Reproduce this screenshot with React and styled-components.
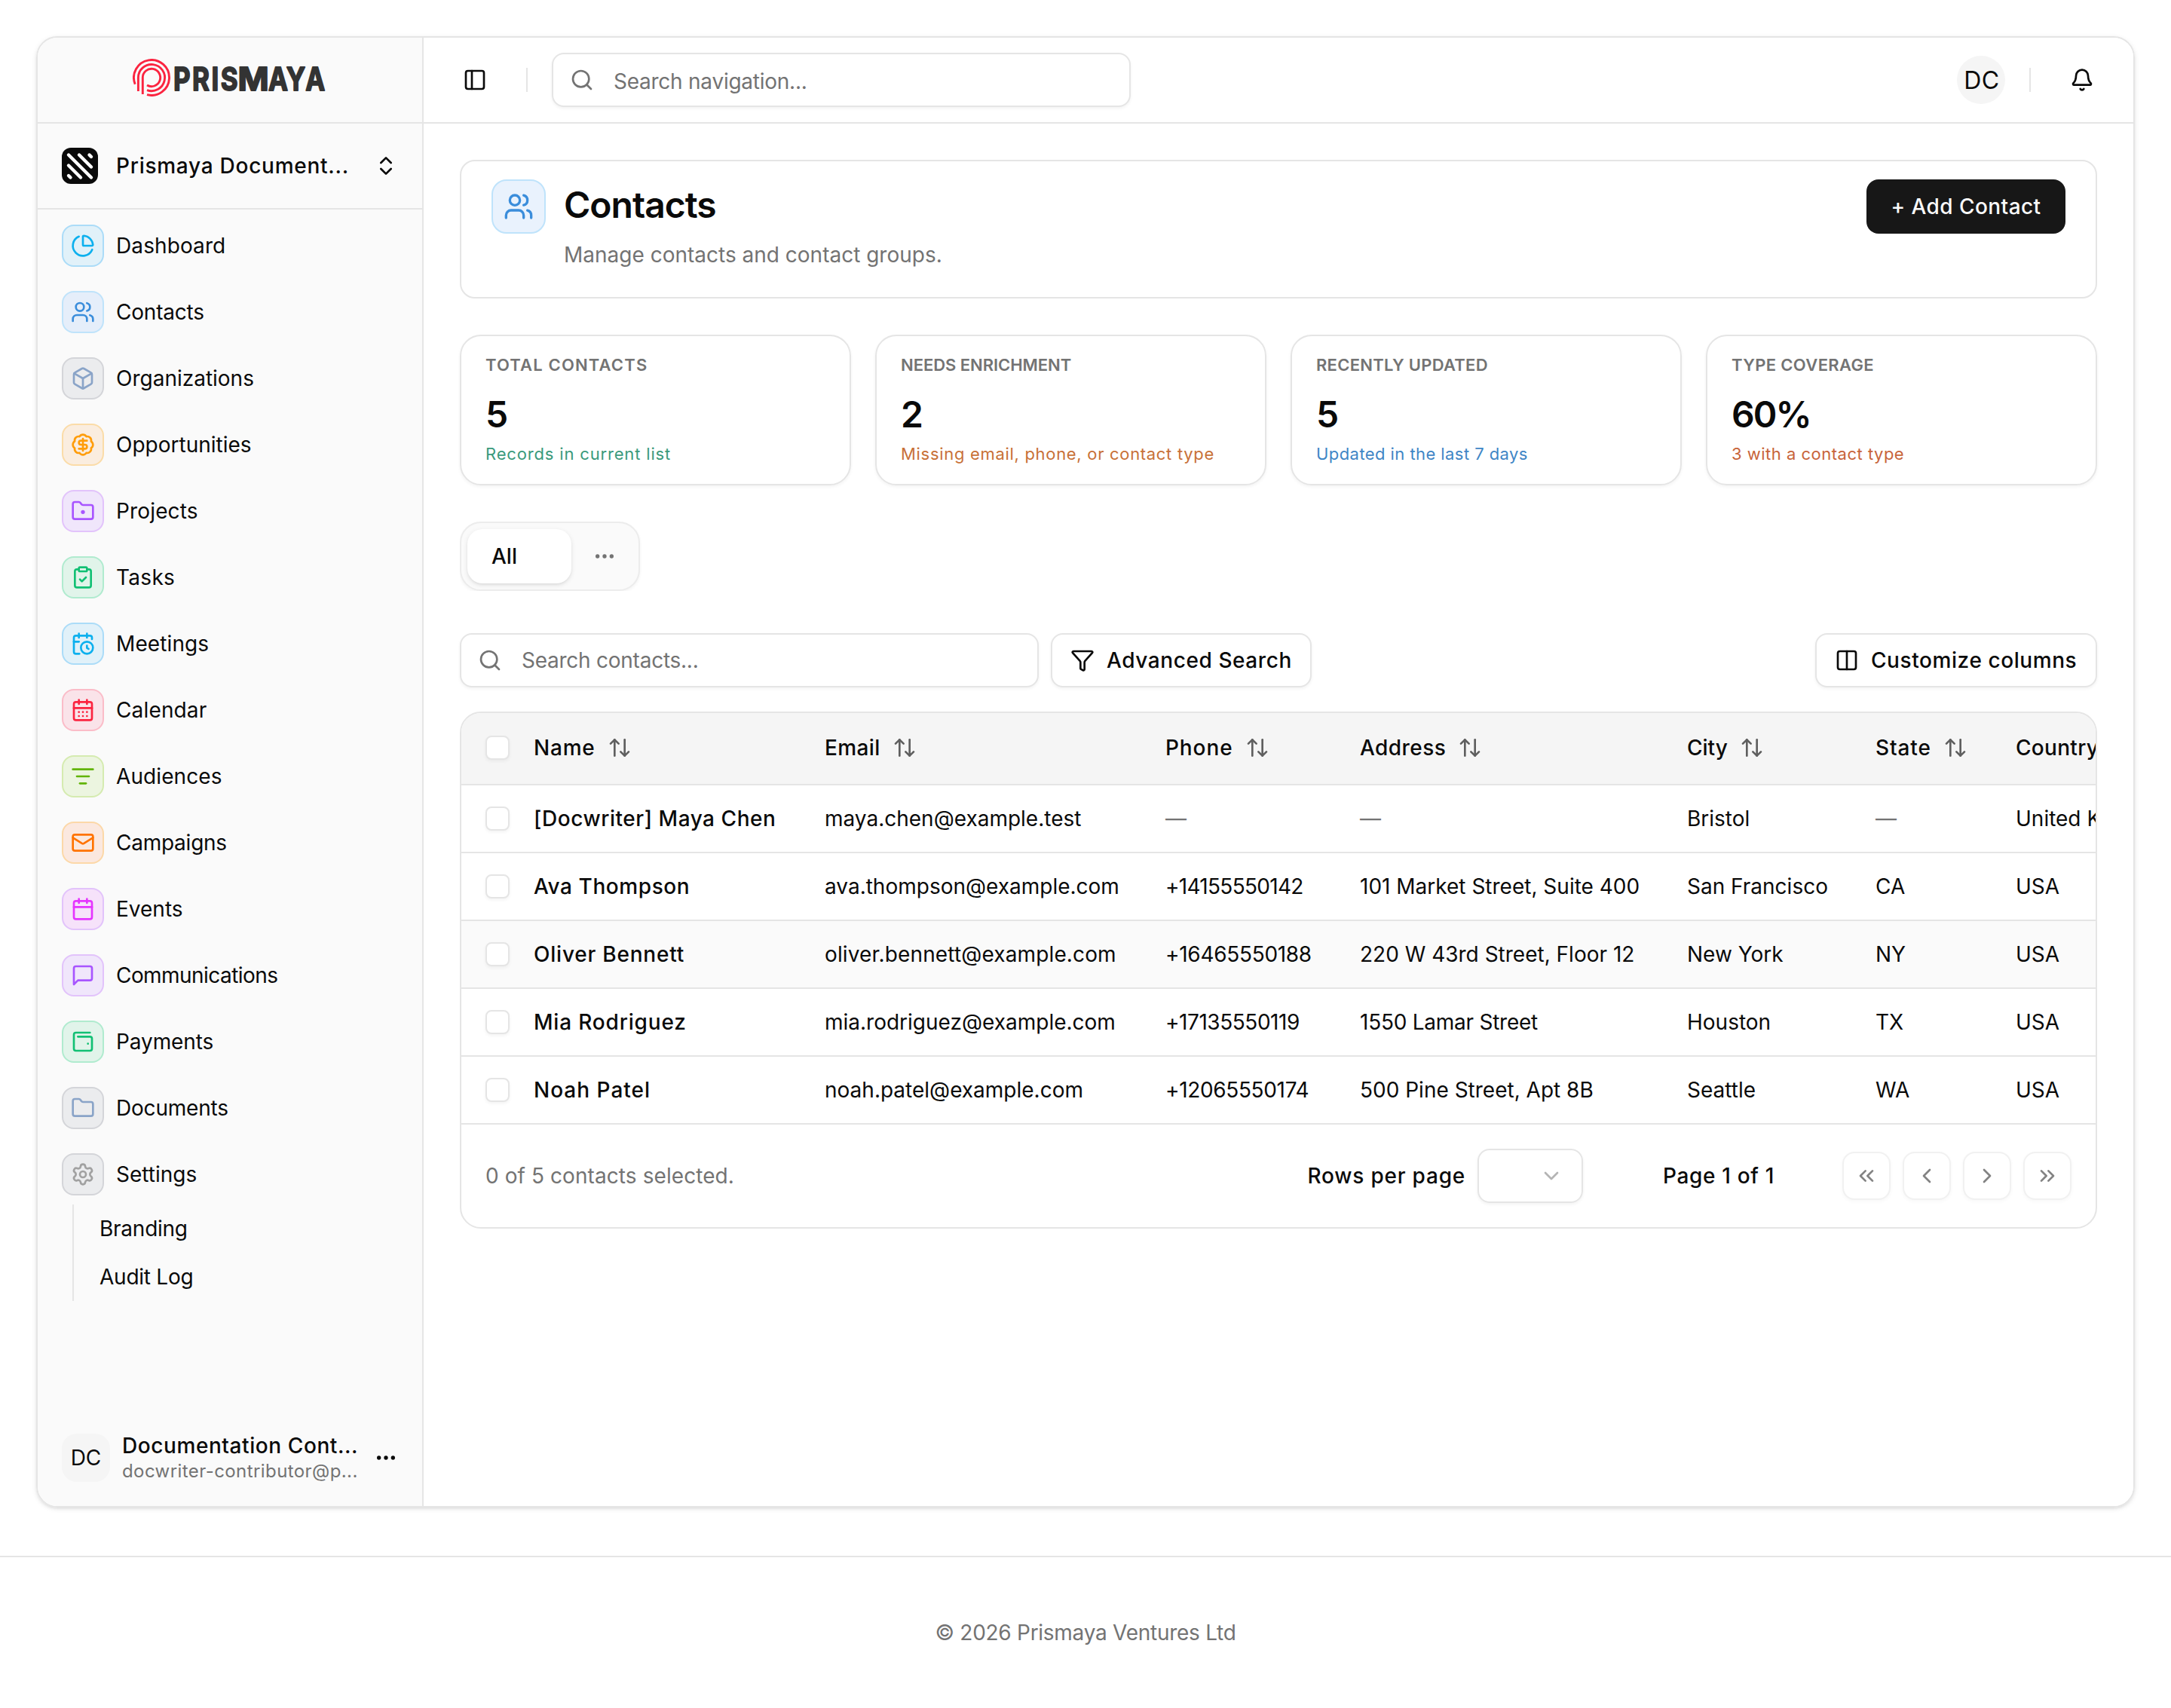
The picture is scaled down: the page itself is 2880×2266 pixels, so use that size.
import React from "react";
import styled, { createGlobalStyle } from "styled-components";
import {
  ArrowUpDown, BadgeDollarSign, Bell, Box, Calendar, CalendarClock, CalendarDays, ChartPie,
  ChevronDown, ChevronLeft, ChevronRight, ChevronsLeft, ChevronsRight, ChevronsUpDown,
  ClipboardCheck, Columns2, Ellipsis, Folder, FolderDot, Funnel, ListFilter, Mail, PanelLeft,
  Search, Settings, Users, WalletMinimal,
} from "lucide-react";

const INK = "#0a0a0a";
const MUTED = "#737373";
const LINE = "#e5e5e5";

const GlobalStyle = createGlobalStyle`
  *, *::before, *::after { box-sizing: border-box; }
  body {
    margin: 0;
    background: #fff;
    color: ${INK};
    font-family: Inter, "Liberation Sans", sans-serif;
    font-size: 28px;
    line-height: 40px;
  }
  svg { display: block; flex: none; }
  button { font: inherit; color: inherit; }
`;

const Page = styled.div`
  display: flex;
  flex-direction: column;
  width: 2880px;
  height: 2266px;
  overflow: hidden;
`;

const Shell = styled.div`
  display: flex;
  height: 1952px;
  margin: 48px 48px 64px;
  border: 2px solid ${LINE};
  border-radius: 28px;
  overflow: hidden;
  flex: none;
  box-shadow: 0 2px 6px rgba(0, 0, 0, 0.1), 0 2px 4px -2px rgba(0, 0, 0, 0.1);
`;

const Sidebar = styled.aside`
  display: flex;
  flex-direction: column;
  width: 512px;
  flex: none;
  background: #fafafa;
  border-right: 2px solid ${LINE};
`;

const Brand = styled.div`
  display: flex;
  align-items: center;
  height: 114px;
  padding: 0 0 6px 126px;
  border-bottom: 2px solid ${LINE};
`;

const Workspace = styled.div`
  display: flex;
  align-items: center;
  height: 114px;
  padding: 0 32px;
  border-bottom: 2px solid ${LINE};
`;

const WorkspaceMark = styled.div`
  width: 48px;
  height: 48px;
  border-radius: 12px;
  background: ${INK};
`;

const WorkspaceName = styled.span`
  flex: 1;
  margin-left: 24px;
  font-weight: 500;
  letter-spacing: 0.74px;
  white-space: nowrap;
`;

const Nav = styled.nav`
  display: flex;
  flex-direction: column;
  padding: 4px 32px 0;
`;

const NavItem = styled.a`
  display: flex;
  align-items: center;
  gap: 16px;
  height: 88px;
  letter-spacing: ${(p) => p.$track || 0}px;
`;

const IconTile = styled.span`
  display: flex;
  align-items: center;
  justify-content: center;
  flex: none;
  width: ${(p) => p.$size || 56}px;
  height: ${(p) => p.$size || 56}px;
  border: 2px solid ${(p) => p.$line};
  border-radius: ${(p) => (p.$size ? 20 : 16)}px;
  background: ${(p) => p.$fill};
  color: ${(p) => p.$ink};
`;

const SubNav = styled.div`
  display: flex;
  flex-direction: column;
  gap: 8px;
  margin: -4px 0 0 14px;
  padding: 4px 0 4px 34px;
  border-left: 2px solid ${LINE};
`;

const SubItem = styled.a`
  display: flex;
  align-items: center;
  height: 56px;
  letter-spacing: -0.25px;
`;

const Account = styled.div`
  display: flex;
  align-items: center;
  height: 98px;
  margin-top: auto;
  padding: 0 32px 30px;
`;

const AccountAvatar = styled.div`
  display: flex;
  align-items: center;
  justify-content: center;
  width: 64px;
  height: 64px;
  border-radius: 20px;
  background: #f5f5f5;
`;

const AccountText = styled.div`
  flex: 1;
  margin-left: 16px;
  white-space: nowrap;
`;

const AccountName = styled.div`
  font-weight: 500;
  line-height: 35px;
  letter-spacing: 0.58px;
`;

const AccountMail = styled.div`
  color: ${MUTED};
  font-size: 24px;
  line-height: 32px;
  letter-spacing: 0.42px;
`;

const Main = styled.main`
  display: flex;
  flex-direction: column;
  flex: 1;
  min-width: 0;
  background: #fff;
`;

const TopBar = styled.header`
  display: flex;
  align-items: center;
  height: 114px;
  padding: 0 52px;
  border-bottom: 2px solid ${LINE};
`;

const Rule = styled.span`
  width: 2px;
  height: 32px;
  background: ${LINE};
  margin: 0 ${(p) => p.$after}px 0 ${(p) => p.$before}px;
`;

const SearchBox = styled.div`
  display: flex;
  align-items: center;
  gap: 26px;
  width: 768px;
  height: 72px;
  padding: 0 22px;
  border: 2px solid ${LINE};
  border-radius: 16px;
  background: #fff;
  color: ${MUTED};
  box-shadow: 0 2px 4px rgba(0, 0, 0, 0.05);
`;

const Placeholder = styled.span`
  padding-top: ${(p) => p.$drop || 0}px;
  letter-spacing: -0.25px;
`;

const Avatar = styled.div`
  display: flex;
  align-items: center;
  justify-content: center;
  width: 64px;
  height: 64px;
  margin-left: auto;
  padding: 2px 0 0 2px;
  border-radius: 50%;
  background: #f5f5f5;
  font-size: 32px;
  letter-spacing: 0.6px;
`;

const Content = styled.div`
  display: flex;
  flex-direction: column;
  padding: 48px;
`;

const PageHeader = styled.section`
  display: flex;
  align-items: flex-start;
  height: 184px;
  padding: 24px 40px;
  border: 2px solid ${LINE};
  border-radius: 20px;
`;

const PageHeading = styled.div`
  flex: 1;
  margin-left: 24px;
`;

const Title = styled.h1`
  margin: 0;
  font-size: 48px;
  font-weight: 600;
  line-height: 68px;
  letter-spacing: -1px;
`;

const Description = styled.p`
  margin: 12px 0 0;
  color: ${MUTED};
`;

const PrimaryButton = styled.button`
  width: 264px;
  height: 72px;
  padding: 0;
  border: 0;
  border-radius: 16px;
  background: #171717;
  color: #fafafa;
  font-weight: 500;
  letter-spacing: 0.44px;
`;

const Stats = styled.section`
  display: grid;
  grid-template-columns: repeat(4, 1fr);
  gap: 32px;
  margin-top: 48px;
`;

const StatCard = styled.div`
  height: 200px;
  padding: 24px 32px;
  border: 2px solid ${LINE};
  border-radius: 28px;
  box-shadow: 0 2px 4px rgba(0, 0, 0, 0.05);
  white-space: nowrap;
`;

const StatLabel = styled.div`
  color: ${MUTED};
  font-size: 22px;
  font-weight: 600;
  line-height: 28px;
  letter-spacing: ${(p) => p.$track}px;
`;

const StatValue = styled.div`
  margin-top: 16px;
  font-size: 48px;
  font-weight: 600;
  line-height: 72px;
  letter-spacing: -0.04em;
`;

const StatNote = styled.div`
  color: ${(p) => p.$ink};
  font-size: 22px;
  line-height: 32px;
  letter-spacing: ${(p) => p.$track}px;
`;

const TabStrip = styled.div`
  height: 92px;
  margin-top: 48px;
  overflow: hidden;
`;

const Tabs = styled.div`
  display: flex;
  align-items: center;
  gap: 8px;
  width: 239px;
  height: 92px;
  padding: 0 8px;
  border: 2px solid #ececec;
  border-radius: 28px;
  background: #fafafa;
  box-shadow: 0 2px 4px rgba(0, 0, 0, 0.05);
`;

const Tab = styled.div`
  display: flex;
  align-items: center;
  width: 138px;
  height: 72px;
  padding-left: 32px;
  border-radius: 20px;
  background: #fff;
  font-weight: 500;
  box-shadow: 0 2px 6px rgba(0, 0, 0, 0.1), 0 2px 4px -2px rgba(0, 0, 0, 0.1);
`;

const TabMore = styled.div`
  display: flex;
  justify-content: center;
  width: 72px;
  color: ${MUTED};
`;

const Toolbar = styled.div`
  display: flex;
  gap: 16px;
  margin-top: 56px;
`;

const OutlineButton = styled.button`
  display: flex;
  align-items: center;
  gap: 16px;
  width: ${(p) => p.$width}px;
  height: 72px;
  margin-left: ${(p) => (p.$end ? "auto" : 0)};
  padding: 0 0 0 24px;
  border: 2px solid ${LINE};
  border-radius: 16px;
  background: #fff;
  font-weight: 500;
  letter-spacing: 0.58px;
  white-space: nowrap;
  box-shadow: 0 2px 4px rgba(0, 0, 0, 0.05);
`;

const TableCard = styled.section`
  margin-top: 32px;
  border: 2px solid ${LINE};
  border-radius: 28px;
  overflow: hidden;
`;

const Table = styled.table`
  width: 2322px;
  table-layout: fixed;
  border-collapse: separate;
  border-spacing: 0;
  white-space: nowrap;
`;

const HeadCell = styled.th`
  height: 96px;
  padding: 0 0 0 ${(p) => p.$pad || 0}px;
  border-bottom: 2px solid ${LINE};
  background: #f5f5f5;
  font-weight: 500;
  text-align: left;
`;

const HeadLabel = styled.span`
  display: flex;
  align-items: center;
  gap: 16px;
  height: 40px;
  margin-top: -2px;
  letter-spacing: ${(p) => p.$track}px;
`;

const SortIcon = styled(ArrowUpDown)`
  color: #5f5f5f;
`;

const Cell = styled.td`
  height: 90px;
  padding: 0 0 0 ${(p) => p.$pad || 0}px;
  border-bottom: 2px solid ${LINE};
  background: ${(p) => (p.$active ? "#fafafa" : "#fff")};
  color: ${(p) => (p.$empty ? MUTED : INK)};
  font-weight: ${(p) => (p.$strong ? 500 : 400)};
  letter-spacing: ${(p) => p.$track || 0}px;
`;

const Checkbox = styled.span`
  display: block;
  width: 32px;
  height: 32px;
  margin-top: ${(p) => p.$lift || 0}px;
  border: 2px solid ${LINE};
  border-radius: 8px;
  background: #fff;
  box-shadow: 0 2px 4px rgba(0, 0, 0, 0.05);
`;

const TableFooter = styled.div`
  display: flex;
  align-items: center;
  height: 136px;
  padding: 0 32px;
`;

const Selected = styled.span`
  flex: 1;
  color: ${MUTED};
  letter-spacing: 0.08px;
`;

const Strong = styled.span`
  font-weight: 500;
  letter-spacing: 0.78px;
`;

const PageSize = styled.div`
  display: flex;
  align-items: center;
  justify-content: flex-end;
  width: 140px;
  height: 72px;
  margin-left: 16px;
  padding-right: 24px;
  border: 2px solid ${LINE};
  border-radius: 16px;
  color: #b4b4b4;
  box-shadow: 0 2px 4px rgba(0, 0, 0, 0.05);
`;

const PageCount = styled.div`
  width: 200px;
  margin: 0 64px 0 80px;
  font-weight: 500;
  letter-spacing: 0.66px;
  text-align: center;
`;

const Pager = styled.div`
  display: flex;
  gap: 16px;
`;

const PagerButton = styled.button`
  display: flex;
  align-items: center;
  justify-content: center;
  width: 64px;
  height: 64px;
  padding: 0;
  border: 2px solid ${LINE};
  border-radius: 16px;
  background: #fff;
  box-shadow: 0 2px 4px rgba(0, 0, 0, 0.05);
  opacity: 0.5;
`;

const Footer = styled.footer`
  display: flex;
  align-items: center;
  justify-content: center;
  height: 202px;
  border-top: 2px solid ${LINE};
  color: ${MUTED};
  letter-spacing: -0.27px;
`;

function MessageIcon({ size }) {
  return (
    <svg width={size} height={size} viewBox="0 0 24 24" fill="none" stroke="currentColor" strokeWidth="2" strokeLinecap="round" strokeLinejoin="round">
      <path d="M21 15a2 2 0 0 1-2 2H7l-4 4V5a2 2 0 0 1 2-2h14a2 2 0 0 1 2 2z" />
    </svg>
  );
}

const tones = {
  sky: { $ink: "#0db0ee", $fill: "#e1f1f9", $line: "#abdcf8" },
  blue: { $ink: "#3a8ddb", $fill: "#e5eefa", $line: "#bfe3fb" },
  blueOnWhite: { $ink: "#3a8ddb", $fill: "#e9f2fd", $line: "#bfe3fb" },
  slate: { $ink: "#8aa4c8", $fill: "#ebecee", $line: "#d4d5d9" },
  gray: { $ink: "#a1a1a1", $fill: "#ebecee", $line: "#d4d5d9" },
  amber: { $ink: "#ff9d0a", $fill: "#faeddf", $line: "#fbdca8" },
  violet: { $ink: "#a855ff", $fill: "#f0e6fb", $line: "#e2c3fb" },
  green: { $ink: "#12c074", $fill: "#e1f4ea", $line: "#b0ebcf" },
  red: { $ink: "#fb2440", $fill: "#fae3e9", $line: "#fbbcc8" },
  lime: { $ink: "#62b404", $fill: "#ecf5e0", $line: "#d5ebb0" },
  orange: { $ink: "#ff7300", $fill: "#fbe8df", $line: "#fcd8a8" },
  pink: { $ink: "#e535ff", $fill: "#f6e2fa", $line: "#e2c3fb" },
};

const navItems = [
  ["Dashboard", ChartPie, "sky", 0.1],
  ["Contacts", Users, "blue", -0.2],
  ["Organizations", Box, "slate"],
  ["Opportunities", BadgeDollarSign, "amber"],
  ["Projects", FolderDot, "violet", 0.15],
  ["Tasks", ClipboardCheck, "green", 0.3],
  ["Meetings", CalendarClock, "sky", 0.1],
  ["Calendar", CalendarDays, "red", 0.15],
  ["Audiences", ListFilter, "lime", 0.1],
  ["Campaigns", Mail, "orange", -0.25],
  ["Events", Calendar, "pink"],
  ["Communications", MessageIcon, "violet", -0.56],
  ["Payments", WalletMinimal, "green", -0.1],
  ["Documents", Folder, "slate", -0.2],
  ["Settings", Settings, "gray"],
];

const stats = [
  { label: "TOTAL CONTACTS", labelTrack: 1.15, value: "5", note: "Records in current list", noteTrack: 0.83, ink: "#3a9a7c" },
  { label: "NEEDS ENRICHMENT", labelTrack: -0.05, value: "2", note: "Missing email, phone, or contact type", noteTrack: 0.69, ink: "#c87137" },
  { label: "RECENTLY UPDATED", labelTrack: 0.25, value: "5", note: "Updated in the last 7 days", noteTrack: 0.43, ink: "#3f86c6" },
  { label: "TYPE COVERAGE", labelTrack: 0.35, value: "60%", note: "3 with a contact type", noteTrack: 0.5, ink: "#c8643a" },
];

const columnWidths = [96, 386, 452, 258, 434, 250, 186, 260];
const columns = [
  ["Name", 0.8], ["Email", 0.4], ["Phone", 0.9], ["Address", 0.45], ["City", 0], ["State", 0.9], ["Country", 0.3],
];

const nameTracks = [0.54, 0.58, 0.78, 0.82, 1];
const phoneTracks = [0, -0.7, -0.3, -0.45, -0.35];

const contacts = [
  ["[Docwriter] Maya Chen", "maya.chen@example.test", "—", "—", "Bristol", "—", "United Kingdom"],
  ["Ava Thompson", "ava.thompson@example.com", "+14155550142", "101 Market Street, Suite 400", "San Francisco", "CA", "USA"],
  ["Oliver Bennett", "oliver.bennett@example.com", "+16465550188", "220 W 43rd Street, Floor 12", "New York", "NY", "USA"],
  ["Mia Rodriguez", "mia.rodriguez@example.com", "+17135550119", "1550 Lamar Street", "Houston", "TX", "USA"],
  ["Noah Patel", "noah.patel@example.com", "+12065550174", "500 Pine Street, Apt 8B", "Seattle", "WA", "USA"],
];

function cellTrack(row, column) {
  if (column === 0) return nameTracks[row];
  if (column === 1 && row === 2) return 0.14;
  if (column === 2) return phoneTracks[row];
  if (column === 3 && row === 3) return -0.25;
  return 0;
}

function Logo() {
  return (
    <svg width="264" height="50" viewBox="0 0 264 50" role="img" aria-label="Prismaya">
      <g fill="none" stroke="#fb2440" strokeWidth="2.9">
        <path d="M3.2 33.7A23.5 23.5 0 1 1 19 47.7" />
        <path d="M7.4 43V25A17.6 17.6 0 1 1 19 41.6" />
        <path d="M13.3 47V25A11.7 11.7 0 1 1 19 35" />
      </g>
      <g fill="#333" stroke="#333" strokeWidth="1.8" strokeLinejoin="round" fontFamily="Inter, sans-serif" fontWeight="700" fontSize="42.5">
        <text transform="scale(0.82 1)" x="66 96.5 127.4 142.5" y="41.5">PRIS</text>
        <text transform="translate(139.5 41.5) scale(1.04 1)">M</text>
        <text transform="scale(0.82 1)" x="219.5 248.5 279.5" y="41.5">AYA</text>
      </g>
    </svg>
  );
}

function StripesIcon() {
  return (
    <svg width="48" height="48" viewBox="0 0 48 48" fill="none" stroke="#fff" strokeWidth="4.4" strokeLinecap="round">
      <path d="M9 9.5 39 39.5M23 9.5 39 25.5M36.5 9.5 39 12M9 23.5 25 39.5M9 37 11.5 39.5" />
    </svg>
  );
}

function SideNavigation() {
  return (
    <Sidebar>
      <Brand><Logo /></Brand>
      <Workspace>
        <WorkspaceMark><StripesIcon /></WorkspaceMark>
        <WorkspaceName>Prismaya Document...</WorkspaceName>
        <ChevronsUpDown size={32} />
      </Workspace>
      <Nav>
        {navItems.map(([label, Icon, tone, track]) => (
          <NavItem key={label} $track={track}>
            <IconTile {...tones[tone]}><Icon size={32} /></IconTile>
            {label}
          </NavItem>
        ))}
        <SubNav>
          <SubItem>Branding</SubItem>
          <SubItem>Audit Log</SubItem>
        </SubNav>
      </Nav>
      <Account>
        <AccountAvatar>DC</AccountAvatar>
        <AccountText>
          <AccountName>Documentation Cont...</AccountName>
          <AccountMail>docwriter-contributor@p...</AccountMail>
        </AccountText>
        <Ellipsis size={32} />
      </Account>
    </Sidebar>
  );
}

function ContactsTable() {
  return (
    <TableCard>
      <Table>
        <colgroup>
          {columnWidths.map((width, i) => <col key={i} width={width} />)}
        </colgroup>
        <thead>
          <tr>
            <HeadCell $pad={32}><Checkbox $lift={-2} /></HeadCell>
            {columns.map(([label, track]) => (
              <HeadCell key={label}>
                <HeadLabel $track={track}>{label}<SortIcon size={32} /></HeadLabel>
              </HeadCell>
            ))}
          </tr>
        </thead>
        <tbody>
          {contacts.map((row, r) => (
            <tr key={row[0]}>
              <Cell $pad={32} $active={r === 2}><Checkbox /></Cell>
              {row.map((value, c) => (
                <Cell key={c} $active={r === 2} $strong={c === 0} $empty={value === "—"} $track={cellTrack(r, c)}>
                  {value}
                </Cell>
              ))}
            </tr>
          ))}
        </tbody>
      </Table>
      <TableFooter>
        <Selected>0 of 5 contacts selected.</Selected>
        <Strong>Rows per page</Strong>
        <PageSize><ChevronDown size={32} /></PageSize>
        <PageCount>Page 1 of 1</PageCount>
        <Pager>
          {[ChevronsLeft, ChevronLeft, ChevronRight, ChevronsRight].map((Icon, i) => (
            <PagerButton key={i}><Icon size={32} /></PagerButton>
          ))}
        </Pager>
      </TableFooter>
    </TableCard>
  );
}

export default function App() {
  return (
    <Page>
      <GlobalStyle />
      <Shell>
        <SideNavigation />
        <Main>
          <TopBar>
            <PanelLeft size={32} />
            <Rule $before={52} $after={32} />
            <SearchBox>
              <Search size={32} />
              <Placeholder $drop={3}>Search navigation...</Placeholder>
            </SearchBox>
            <Avatar>DC</Avatar>
            <Rule $before={32} $after={52} />
            <Bell size={32} />
          </TopBar>
          <Content>
            <PageHeader>
              <IconTile $size={72} {...tones.blueOnWhite}><Users size={40} /></IconTile>
              <PageHeading>
                <Title>Contacts</Title>
                <Description>Manage contacts and contact groups.</Description>
              </PageHeading>
              <PrimaryButton>+ Add Contact</PrimaryButton>
            </PageHeader>
            <Stats>
              {stats.map((stat) => (
                <StatCard key={stat.label}>
                  <StatLabel $track={stat.labelTrack}>{stat.label}</StatLabel>
                  <StatValue>{stat.value}</StatValue>
                  <StatNote $ink={stat.ink} $track={stat.noteTrack}>{stat.note}</StatNote>
                </StatCard>
              ))}
            </Stats>
            <TabStrip>
              <Tabs>
                <Tab>All</Tab>
                <TabMore><Ellipsis size={32} /></TabMore>
              </Tabs>
            </TabStrip>
            <Toolbar>
              <SearchBox>
                <Search size={32} />
                <Placeholder>Search contacts...</Placeholder>
              </SearchBox>
              <OutlineButton $width={346}><Funnel size={32} />Advanced Search</OutlineButton>
              <OutlineButton $width={374} $end><Columns2 size={32} />Customize columns</OutlineButton>
            </Toolbar>
            <ContactsTable />
          </Content>
        </Main>
      </Shell>
      <Footer>© 2026 Prismaya Ventures Ltd</Footer>
    </Page>
  );
}
